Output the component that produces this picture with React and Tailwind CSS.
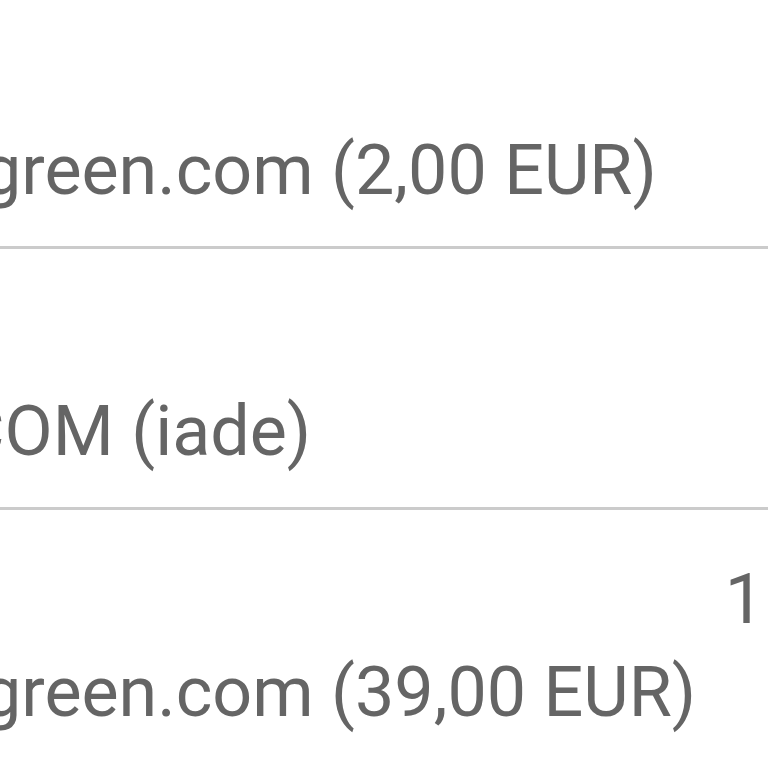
import React from 'react';

const rows = [
  { qty: '', label: 'green.com (2,00 EUR)', shift: '-ml-[18px]' },
  { qty: '', label: 'COM (iade)', shift: '-ml-[41px]' },
  { qty: '1', label: 'green.com (39,00 EUR)', shift: '-ml-[18px]' },
];

const App = () => {
  return (
    <div className="w-[768px] h-[768px] overflow-hidden bg-white text-[#656565] font-['Roboto',sans-serif]">
      <div className="-mt-[12px]">
        {rows.map((row, i) => (
          <div key={i} className="border-b-[3px] border-[#cbcbcb] pt-[43px] pb-[29px]">
            {/* quantity line */}
            <div className="h-[93px] text-[70px] leading-[93px] flex justify-end pr-[4px]">
              <span>{row.qty}</span>
            </div>
            {/* item line */}
            <div className={`h-[93px] text-[70px] leading-[93px] whitespace-nowrap ${row.shift}`}>
              {row.label}
            </div>
          </div>
        ))}
      </div>
    </div>
  );
};

export default App;
